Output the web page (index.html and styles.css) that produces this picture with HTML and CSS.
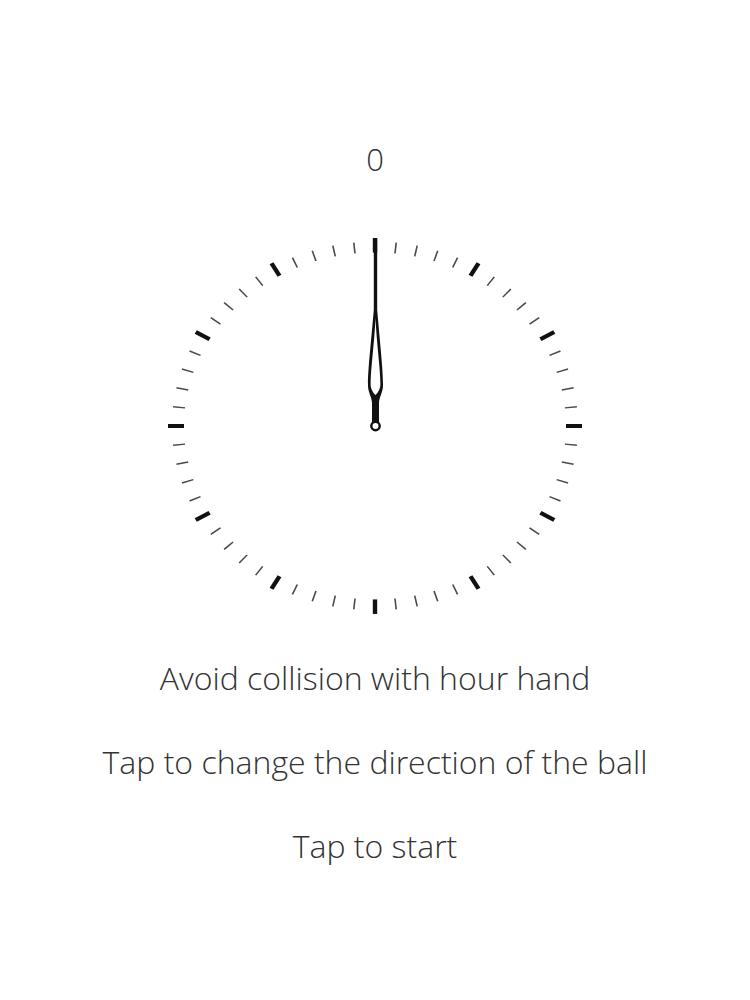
FILE: index.html
```html
<!DOCTYPE html>
<html lang="en">
<head>
<meta charset="utf-8">
<title>Clock</title>
<link rel="stylesheet" href="styles.css">
</head>
<body>
<main class="screen">
  <div class="score">0</div>
  <svg class="clock" viewBox="0 0 460 420" width="460" height="420" aria-hidden="true">
    <defs>
      <line id="mj" x1="0" y1="-191" x2="0" y2="-207" class="major"/>
      <line id="mn" x1="0" y1="-191" x2="0" y2="-203" class="minor"/>
    </defs>
    <g transform="translate(230 210) scale(1 0.908)">
      <use href="#mj" transform="rotate(0)"/>
      <use href="#mn" transform="rotate(6)"/>
      <use href="#mn" transform="rotate(12)"/>
      <use href="#mn" transform="rotate(18)"/>
      <use href="#mn" transform="rotate(24)"/>
      <use href="#mj" transform="rotate(30)"/>
      <use href="#mn" transform="rotate(36)"/>
      <use href="#mn" transform="rotate(42)"/>
      <use href="#mn" transform="rotate(48)"/>
      <use href="#mn" transform="rotate(54)"/>
      <use href="#mj" transform="rotate(60)"/>
      <use href="#mn" transform="rotate(66)"/>
      <use href="#mn" transform="rotate(72)"/>
      <use href="#mn" transform="rotate(78)"/>
      <use href="#mn" transform="rotate(84)"/>
      <use href="#mj" transform="rotate(90)"/>
      <use href="#mn" transform="rotate(96)"/>
      <use href="#mn" transform="rotate(102)"/>
      <use href="#mn" transform="rotate(108)"/>
      <use href="#mn" transform="rotate(114)"/>
      <use href="#mj" transform="rotate(120)"/>
      <use href="#mn" transform="rotate(126)"/>
      <use href="#mn" transform="rotate(132)"/>
      <use href="#mn" transform="rotate(138)"/>
      <use href="#mn" transform="rotate(144)"/>
      <use href="#mj" transform="rotate(150)"/>
      <use href="#mn" transform="rotate(156)"/>
      <use href="#mn" transform="rotate(162)"/>
      <use href="#mn" transform="rotate(168)"/>
      <use href="#mn" transform="rotate(174)"/>
      <use href="#mj" transform="rotate(180)"/>
      <use href="#mn" transform="rotate(186)"/>
      <use href="#mn" transform="rotate(192)"/>
      <use href="#mn" transform="rotate(198)"/>
      <use href="#mn" transform="rotate(204)"/>
      <use href="#mj" transform="rotate(210)"/>
      <use href="#mn" transform="rotate(216)"/>
      <use href="#mn" transform="rotate(222)"/>
      <use href="#mn" transform="rotate(228)"/>
      <use href="#mn" transform="rotate(234)"/>
      <use href="#mj" transform="rotate(240)"/>
      <use href="#mn" transform="rotate(246)"/>
      <use href="#mn" transform="rotate(252)"/>
      <use href="#mn" transform="rotate(258)"/>
      <use href="#mn" transform="rotate(264)"/>
      <use href="#mj" transform="rotate(270)"/>
      <use href="#mn" transform="rotate(276)"/>
      <use href="#mn" transform="rotate(282)"/>
      <use href="#mn" transform="rotate(288)"/>
      <use href="#mn" transform="rotate(294)"/>
      <use href="#mj" transform="rotate(300)"/>
      <use href="#mn" transform="rotate(306)"/>
      <use href="#mn" transform="rotate(312)"/>
      <use href="#mn" transform="rotate(318)"/>
      <use href="#mn" transform="rotate(324)"/>
      <use href="#mj" transform="rotate(330)"/>
      <use href="#mn" transform="rotate(336)"/>
      <use href="#mn" transform="rotate(342)"/>
      <use href="#mn" transform="rotate(348)"/>
      <use href="#mn" transform="rotate(354)"/>
    </g>
    <g class="hand">
      <path class="hand-body" d="M228.8,22 L232.2,22 L232.2,94 C234.8,125 238.3,155 238,170 C237.7,177 234.2,181 234,187 L234,206 L227,206 L227,187 C226.8,181 223.3,177 223,170 C222.7,155 226.2,125 228.8,94 Z"/>
      <path class="hand-hole" d="M230.5,102 C231.7,128 235.4,153 235.4,168 C235.4,173.5 232.6,177 230.5,179 C228.4,177 225.6,173.5 225.6,168 C225.6,153 229.3,128 230.5,102 Z"/>
      <circle class="pivot" cx="230.5" cy="210" r="4.2"/>
    </g>
  </svg>
  <p class="line line-first">Avoid collision with hour hand</p>
  <p class="line">Tap to change the direction of the ball</p>
  <p class="line">Tap to start</p>
</main>
</body>
</html>
```

FILE: styles.css
```css
html, body {
  margin: 0;
  padding: 0;
  background: #ffffff;
}

.screen {
  width: 750px;
  height: 1000px;
  display: flex;
  flex-direction: column;
  align-items: center;
  font-family: "Open Sans", "Noto Sans", sans-serif;
  font-weight: 300;
  color: #333333;
}

.score {
  margin-top: 139px;
  height: 40px;
  line-height: 40px;
  font-size: 31px;
}

.clock {
  display: block;
  margin-top: 37px;
  width: 460px;
  height: 420px;
}

.major {
  stroke: #111111;
  stroke-width: 4.4;
}

.minor {
  stroke: #4a4a4a;
  stroke-width: 1.6;
}

.hand-body {
  fill: #111111;
}

.hand-hole {
  fill: #ffffff;
}

.pivot {
  fill: #ffffff;
  stroke: #111111;
  stroke-width: 2.4;
}

.line {
  margin: 44px 0 0;
  height: 40px;
  line-height: 40px;
  font-size: 32px;
  white-space: nowrap;
}

.line-first {
  margin-top: 22px;
}
```
